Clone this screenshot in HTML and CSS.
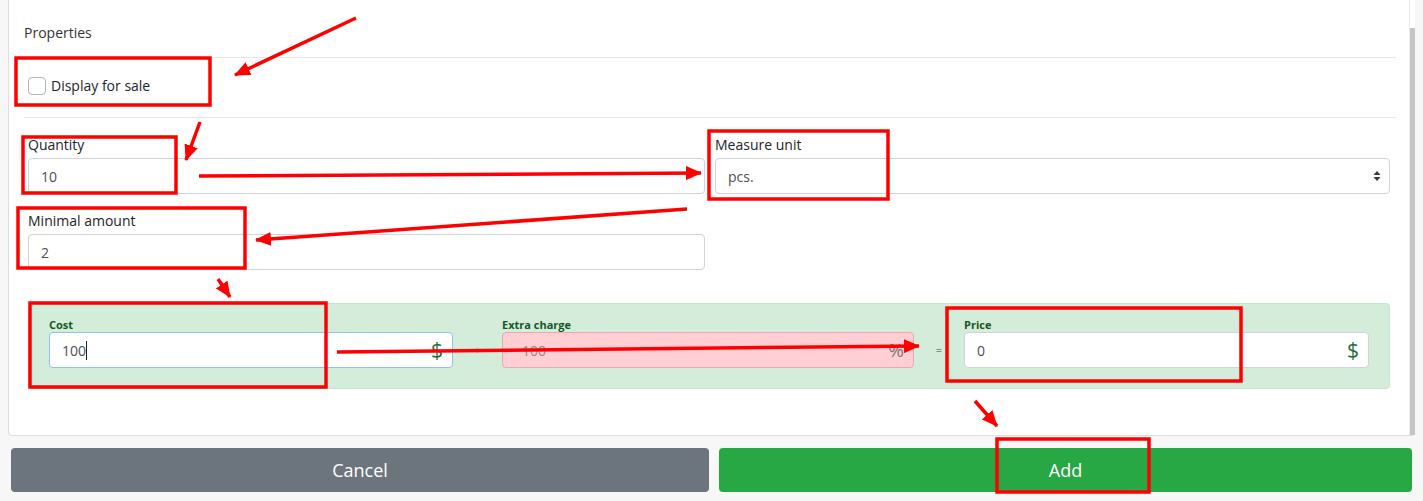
FILE: index.html
```html
<!DOCTYPE html>
<html lang="en">
  <head>
    <meta charset="UTF-8" />
    <meta name="viewport" content="width=device-width, initial-scale=1.0" />
    <link rel="stylesheet" href="styles.css">
  </head>
  <body>
    <div class="modal-body">
      <div class="scroll-area">
        <h6 class="section-title">Properties</h6>
        <hr />
        <label class="check">
          <span class="check-box"></span>
          <span>Display for sale</span>
        </label>
        <hr />

        <div class="form-grid">
          <div class="field">
            <label for="qty">Quantity</label>
            <input type="text" id="qty" class="form-control" value="10" />
          </div>
          <div class="field">
            <label for="unit">Measure unit</label>
            <div class="select-wrap">
              <select id="unit" class="form-control">
                <option>pcs.</option>
              </select>
              <svg class="select-arrows" width="8" height="12" viewBox="0 0 8 12">
                <path d="M4 1 L7.5 5 L0.5 5 Z" fill="#343a40" />
                <path d="M4 11 L7.5 7 L0.5 7 Z" fill="#343a40" />
              </svg>
            </div>
          </div>
          <div class="field">
            <label for="min">Minimal amount</label>
            <input type="text" id="min" class="form-control" value="2" />
          </div>
        </div>

        <div class="pricing">
          <div class="price-col">
            <div class="price-label">Cost</div>
            <div class="money focused">
              <span class="money-value">100<span class="caret"></span></span>
              <span class="money-unit">$</span>
            </div>
          </div>
          <div class="sign sign-light">+</div>
          <div class="price-col">
            <div class="price-label">Extra charge</div>
            <div class="money charge">
              <span class="money-value">100</span>
              <span class="money-unit">%</span>
            </div>
          </div>
          <div class="sign">=</div>
          <div class="price-col">
            <div class="price-label">Price</div>
            <div class="money">
              <span class="money-value">0</span>
              <span class="money-unit">$</span>
            </div>
          </div>
        </div>
      </div>
      <div class="scrollbar"><div class="thumb"></div></div>
    </div>

    <div class="actions">
      <button class="btn btn-cancel">Cancel</button>
      <button class="btn btn-add">Add</button>
    </div>

    <!-- review marks drawn over the form -->
    <svg class="marks" width="1423" height="501" viewBox="0 0 1423 501">
      <defs>
        <marker id="head" markerUnits="userSpaceOnUse" markerWidth="16" markerHeight="14" refX="15" refY="7" orient="auto">
          <path d="M0 0 L16 7 L0 14 Z" fill="#ff0000" />
        </marker>
      </defs>
      <g fill="none" stroke="#ff0000" stroke-width="3.5">
        <rect x="16" y="58" width="194" height="47" />
        <rect x="23" y="137" width="153" height="56" />
        <rect x="18" y="208" width="227" height="60" />
        <rect x="709" y="131" width="179" height="68" />
        <rect x="30" y="303" width="296" height="84" />
        <rect x="947" y="308" width="294" height="73" />
        <rect x="997" y="439" width="152" height="53" />
      </g>
      <g stroke="#ff0000" stroke-width="3.5" marker-end="url(#head)">
        <line x1="356" y1="18" x2="235" y2="75" />
        <line x1="200" y1="122" x2="186" y2="160" />
        <line x1="199" y1="176" x2="701" y2="173" />
        <line x1="687" y1="209" x2="256" y2="240" />
        <line x1="218" y1="279" x2="230" y2="297" />
        <line x1="337" y1="352" x2="919" y2="346" />
        <line x1="975" y1="401" x2="997" y2="426" />
      </g>
    </svg>
  </body>
</html>
```

FILE: styles.css
```css
body {
  margin: 0;
  background-color: #f7f7f7;
  font-family: "Open Sans", "Noto Sans", sans-serif;
  color: #212529;
  font-size: 14px;
  position: relative;
  overflow: hidden;
  height: 501px;
}
.modal-body {
  margin: 0 8px;
  height: 435px;
  background-color: #fff;
  border-left: 1px solid #dedede;
  border-bottom: 1px solid #dedede;
  border-radius: 0 0 4px 4px;
  display: flex;
}
.scroll-area {
  flex: 1;
  padding: 22px 13px 0 15px;
}
.scrollbar {
  width: 5px;
  padding-top: 28px;
  border-left: 1px solid #ececec;
}
.thumb {
  height: 407px;
  background-color: #c4c4c4;
}
.section-title {
  margin: 0;
  font-size: 14px;
  font-weight: 500;
  line-height: 22px;
  color: #333;
}
hr {
  border: none;
  border-top: 1px solid #e6e6e6;
  margin: 13px 0 0 0;
}
.check {
  display: flex;
  align-items: center;
  margin: 17px 0 20px 4px;
  line-height: 22px;
  font-size: 14px;
}
.check-box {
  width: 16px;
  height: 16px;
  border: 1px solid #adb5bd;
  border-radius: 4px;
  margin-right: 5px;
}
.form-grid {
  display: grid;
  grid-template-columns: 677px 1fr;
  column-gap: 10px;
  row-gap: 16px;
  margin: 16px 6px 0 4px;
}
.field label {
  display: block;
  line-height: 22px;
  margin-bottom: 2px;
}
.form-control {
  box-sizing: border-box;
  width: 100%;
  height: 36px;
  padding: 0 12px;
  border: 1px solid #ced4da;
  border-radius: 4px;
  font-family: inherit;
  font-size: 14px;
  color: #495057;
  background-color: #fff;
}
.select-wrap {
  position: relative;
}
select.form-control {
  appearance: none;
  -webkit-appearance: none;
}
.select-arrows {
  position: absolute;
  right: 9px;
  top: 12px;
}
.pricing {
  display: grid;
  grid-template-columns: 404px 49px 412px 50px 1fr;
  margin: 33px 6px 0 4px;
  padding: 13px 20px 20px 20px;
  background-color: #d4edda;
  border: 1px solid #c3e6cb;
  border-radius: 4px;
}
.price-label {
  font-size: 11px;
  font-weight: 700;
  line-height: 15px;
  color: #155724;
}
.sign {
  align-self: end;
  height: 36px;
  line-height: 36px;
  text-align: center;
  font-size: 11px;
  color: #155724;
}
.sign-light {
  color: #8aa694;
}
.money {
  display: flex;
  align-items: center;
  height: 36px;
  box-sizing: border-box;
  border: 1px solid #ced4da;
  border-radius: 4px;
  background-color: #fff;
}
.money.focused {
  border-color: #8cc2f5;
}
.money.charge {
  background-color: #ffcfd3;
  border-color: #f3a6ad;
}
.money-value {
  flex: 1;
  padding-left: 12px;
  color: #495057;
  display: flex;
  align-items: center;
}
.charge .money-value {
  color: #8c8c8c;
  padding-left: 19px;
}
.caret {
  display: inline-block;
  width: 1px;
  height: 19px;
  background-color: #222;
}
.money-unit {
  padding-right: 9px;
  font-size: 21px;
  color: #1e6e39;
}
.charge .money-unit {
  color: #777;
  font-size: 19px;
}
.actions {
  display: flex;
  gap: 10px;
  margin: 12px 11px 0 11px;
}
.btn {
  flex: 1;
  height: 44px;
  border: none;
  border-radius: 4px;
  color: #fff;
  font-family: inherit;
  font-size: 18px;
}
.btn-cancel {
  flex: 0 0 698px;
  background-color: #6c757d;
}
.btn-add {
  background-color: #28a745;
}
.marks {
  position: absolute;
  left: 0;
  top: 0;
  pointer-events: none;
}
```
